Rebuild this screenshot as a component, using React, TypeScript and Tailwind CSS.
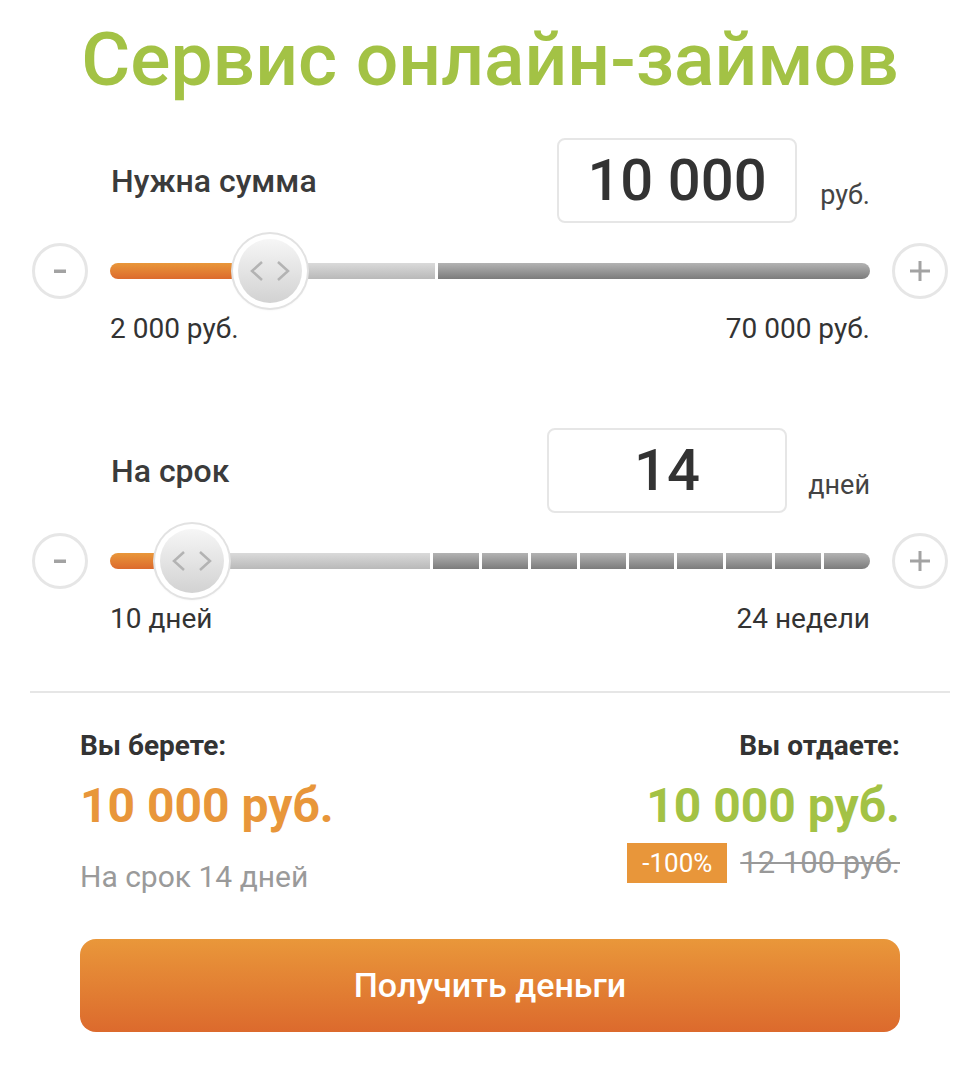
import React from "react";

const orange = "bg-[linear-gradient(to_bottom,#e9973a,#dc6a2d)]";

function RoundButton({ sign }: { sign: "-" | "+" }) {
  return (
    <div className="w-[56px] h-[56px] shrink-0 rounded-full border-[3px] border-[#e6e6e6] bg-white flex items-center justify-center">
      {sign === "-" ? (
        <svg width="16" height="16" viewBox="0 0 16 16">
          <rect x="2" y="6.5" width="12" height="3.5" fill="#a3a3a3" />
        </svg>
      ) : (
        <svg width="20" height="20" viewBox="0 0 20 20">
          <rect x="0" y="8.5" width="20" height="3" fill="#a3a3a3" />
          <rect x="8.5" y="0" width="3" height="20" fill="#a3a3a3" />
        </svg>
      )}
    </div>
  );
}

function Thumb({ left }: { left: number }) {
  return (
    <div
      className="absolute top-1/2 -translate-y-1/2 w-[74px] h-[74px] rounded-full bg-white shadow-[0_0_0_2px_#e2e2e2,0_1px_3px_rgba(0,0,0,0.15)] flex items-center justify-center"
      style={{ left }}
    >
      <div className="w-[64px] h-[64px] rounded-full bg-[linear-gradient(to_bottom,#f6f6f6,#d2d2d2)] flex items-center justify-center">
        <svg width="44" height="22" viewBox="0 0 44 22" fill="none" stroke="#b3b3b3" strokeWidth="2.5">
          <path d="M14 2 L4 11 L14 20" />
          <path d="M30 2 L40 11 L30 20" />
        </svg>
      </div>
    </div>
  );
}

function Slider({
  fill,
  light,
  segments,
  thumb,
}: {
  fill: number;
  light: number;
  segments: number;
  thumb: number;
}) {
  return (
    <div className="flex items-center gap-[22px] px-[32px]">
      <RoundButton sign="-" />
      <div className="relative flex-1 h-[16px] flex gap-[3px]">
        <div className="flex h-full shrink-0" style={{ width: light }}>
          <div className={`h-full rounded-l-full ${orange}`} style={{ width: fill }} />
          <div className="h-full flex-1 bg-[linear-gradient(to_bottom,#dadada,#b9b9b9)]" />
        </div>
        {Array.from({ length: segments }).map((_, i) => (
          <div
            key={i}
            className={`h-full flex-1 bg-[linear-gradient(to_bottom,#b3b3b3,#7c7c7c)] ${
              i === segments - 1 ? "rounded-r-full" : ""
            }`}
          />
        ))}
        <Thumb left={thumb} />
      </div>
      <RoundButton sign="+" />
    </div>
  );
}

function Block({
  label,
  value,
  unit,
  boxLeft,
  min,
  max,
  children,
}: {
  label: string;
  value: string;
  unit: string;
  boxLeft: number;
  min: string;
  max: string;
  children: React.ReactNode;
}) {
  return (
    <div>
      <div className="flex items-center pl-[111px] pr-[110px]">
        <div className="text-[32px] leading-[40px] font-medium text-[#3b3b3b] shrink-0" style={{ width: boxLeft - 111 }}>
          {label}
        </div>
        <div className="w-[240px] h-[85px] border-2 border-[#e6e6e6] rounded-[8px] flex items-center justify-center text-[58px] font-medium text-[#333]">
          {value}
        </div>
        <div className="flex-1 text-right self-end pb-[12px] text-[27px] leading-[32px] text-[#444]">{unit}</div>
      </div>
      <div className="mt-[20px]">{children}</div>
      <div className="mt-[16px] flex justify-between px-[110px] text-[28px] leading-[28px] text-[#333]">
        <span>{min}</span>
        <span>{max}</span>
      </div>
    </div>
  );
}

export default function App() {
  return (
    <div className="w-[980px] h-[1066px] bg-white font-['Roboto',sans-serif] overflow-hidden">
      <h1 className="pt-[19px] text-center text-[75px] leading-[80px] font-medium text-[#a3c245]">
        Сервис онлайн-займов
      </h1>

      <div className="mt-[39px]">
        <Block label="Нужна сумма" value="10 000" unit="руб." boxLeft={557} min="2 000 руб." max="70 000 руб.">
          <Slider fill={150} light={325} segments={1} thumb={123} />
        </Block>
      </div>

      <div className="mt-[85px]">
        <Block label="На срок" value="14" unit="дней" boxLeft={547} min="10 дней" max="24 недели">
          <Slider fill={70} light={320} segments={9} thumb={45} />
        </Block>
      </div>

      <div className="mx-[30px] mt-[58px] h-[2px] bg-[#e6e6e6]" />

      <div className="px-[80px] pt-[38px]">
        <div className="flex justify-between">
          <div className="flex flex-col">
            <div className="text-[28px] leading-[30px] font-bold text-[#333]">Вы берете:</div>
            <div className="mt-[19px] text-[48px] leading-[52px] font-bold text-[#e8963a]">10 000 руб.</div>
            <div className="mt-[29px] text-[30px] leading-[32px] text-[#9a9a9a]">На срок 14 дней</div>
          </div>
          <div className="flex flex-col items-end">
            <div className="text-[28px] leading-[30px] font-bold text-[#333]">Вы отдаете:</div>
            <div className="mt-[19px] text-[48px] leading-[52px] font-bold text-[#a3c245]">10 000 руб.</div>
            <div className="mt-[11px] flex items-center gap-[13px]">
              <span className="h-[40px] w-[100px] bg-[#e8963a] text-white text-[26px] flex items-center justify-center">
                -100%
              </span>
              <span className="text-[31px] leading-[36px] text-[#999] line-through decoration-2">12 100 руб.</span>
            </div>
          </div>
        </div>

        <button
          className={`mt-[46px] w-full h-[93px] rounded-[16px] ${orange} text-white text-[34px] font-medium flex items-center justify-center`}
        >
          Получить деньги
        </button>
      </div>
    </div>
  );
}
